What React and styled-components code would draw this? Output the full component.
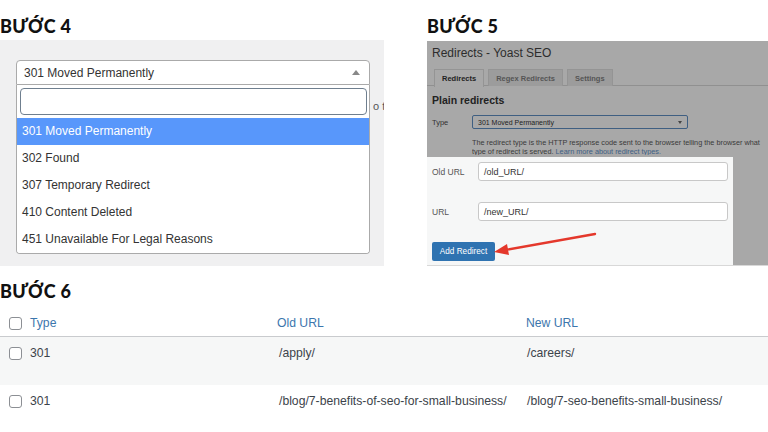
import React from 'react'
import styled, { createGlobalStyle } from 'styled-components'

const Global = createGlobalStyle`
  html, body { margin: 0; padding: 0; background: #fff; }
  body { font-family: "Liberation Sans", Arial, sans-serif; }
  * { box-sizing: border-box; }
`

const Page = styled.div`
  width: 768px;
  height: 432px;
  overflow: hidden;
  display: flex;
  flex-direction: column;
`

const TopRow = styled.div`
  display: grid;
  grid-template-columns: 384px 341px;
  column-gap: 43px;
  padding-top: 16px;
`

const Column = styled.div`
  display: flex;
  flex-direction: column;
`

const Heading = styled.h2`
  margin: 0;
  font-family: Lato, "Open Sans", sans-serif;
  font-weight: 900;
  font-size: 18px;
  line-height: 21px;
  color: #111;
  letter-spacing: 0.3px;
  height: ${({ $h }) => $h || 24}px;
`

/* ---------- step 4 ---------- */
const GreyPanel = styled.div`
  background: #f0f0f1;
  height: 226px;
  padding: 20px 0 0 16px;
  display: flex;
  overflow: hidden;
`

const Dropdown = styled.div`
  width: 354px;
  flex: none;
  display: flex;
  flex-direction: column;
`

const SelectBox = styled.div`
  height: 25px;
  background: #fff;
  border: 1px solid #aaa;
  border-radius: 4px 4px 0 0;
  display: flex;
  align-items: center;
  justify-content: space-between;
  padding: 0 9px 0 7px;
  font-size: 12px;
  color: #333;
`

const Caret = styled.span`
  width: 0;
  height: 0;
  border-left: 4px solid transparent;
  border-right: 4px solid transparent;
  border-bottom: 5px solid #888;
`

const Menu = styled.div`
  background: #fff;
  border: 1px solid #aaa;
  border-top: none;
  border-radius: 0 0 4px 4px;
  padding-top: 3px;
  height: 169px;
  overflow: hidden;
`

const Search = styled.div`
  height: 27px;
  margin: 0 2px 3px 3px;
  border: 1.5px solid #6f7f8f;
  border-radius: 4px;
`

const Option = styled.div`
  height: 27px;
  line-height: 27px;
  padding-left: 5px;
  font-size: 12px;
  background: ${({ $active }) => ($active ? '#5897fb' : '#fff')};
  color: ${({ $active }) => ($active ? '#fff' : '#333')};
`

const BehindText = styled.span`
  margin: 40px 0 0 3px;
  font-size: 11px;
  color: #555;
  white-space: nowrap;
`

/* ---------- step 5 ---------- */
const Shot = styled.div`
  background: #a8a8a8;
  height: 225px;
  margin-top: 1px;
  overflow: hidden;
  display: flex;
  flex-direction: column;
  border-bottom: 1px solid #d8d8d8;
`

const ShotTitle = styled.div`
  margin: 3px 0 0 5px;
  font-size: 12px;
  line-height: 19px;
  color: #2d2d2d;
`

const Tabs = styled.div`
  margin-top: 5px;
  height: 18px;
  border-bottom: 1px solid #909090;
  display: flex;
  gap: 4px;
  padding-left: 7px;
`

const Tab = styled.div`
  padding: 0 7px;
  height: ${({ $active }) => ($active ? 18 : 17)}px;
  display: flex;
  align-items: center;
  font-size: 7.5px;
  font-weight: 700;
  color: ${({ $active }) => ($active ? '#222' : '#555')};
  background: ${({ $active }) => ($active ? '#a8a8a8' : '#9c9c9c')};
  border: 1px solid #949494;
  border-bottom: none;
  margin-top: ${({ $active }) => ($active ? 0 : 1)}px;
  position: relative;
  top: ${({ $active }) => ($active ? 1 : 0)}px;
`

const SubTitle = styled.div`
  margin: 8px 0 0 5px;
  font-size: 10.5px;
  font-weight: 700;
  line-height: 13px;
  color: #222;
`

const TypeRow = styled.div`
  margin: 8px 0 0 5px;
  display: flex;
  align-items: center;
  height: 14px;
`

const SmallLabel = styled.span`
  width: 40px;
  font-size: 7.5px;
  color: #333;
`

const MiniSelect = styled.div`
  width: 216px;
  height: 14px;
  border: 1px solid #3f5f82;
  border-radius: 2px;
  display: flex;
  align-items: center;
  justify-content: space-between;
  padding: 0 5px;
  font-size: 7px;
  color: #222;
`

const MiniArrow = styled.span`
  width: 0;
  height: 0;
  border-left: 2px solid transparent;
  border-right: 2px solid transparent;
  border-top: 3px solid #444;
`

const Desc = styled.div`
  margin: 9px 0 0 45px;
  font-size: 7.3px;
  line-height: 9px;
  color: #3a3a3a;
  white-space: nowrap;
  height: 17px;
  overflow: hidden;
  a { color: #3e5f84; text-decoration: none; }
`

const FormBox = styled.div`
  position: relative;
  width: 306px;
  margin-top: 2px;
  flex: 1;
  background: #f6f7f7;
  padding: 5px 0 0 5px;
  display: flex;
  flex-direction: column;
  gap: 21px;
`

const FieldRow = styled.div`
  display: flex;
  align-items: center;
  height: 19px;
`

const FieldLabel = styled.span`
  width: 46px;
  font-size: 8.5px;
  color: #555;
`

const Field = styled.div`
  width: 250px;
  height: 19px;
  background: #fff;
  border: 1px solid #c8c8c8;
  border-radius: 3px;
  padding-left: 5px;
  display: flex;
  align-items: center;
  font-size: 9px;
  color: #333;
`

const AddButton = styled.div`
  width: 63px;
  height: 19px;
  background: #2f73b1;
  border-radius: 2px;
  color: #fff;
  font-size: 8.2px;
  display: flex;
  align-items: center;
  justify-content: center;
`

const ArrowSvg = styled.svg`
  position: absolute;
  left: 64px;
  top: 74px;
`

/* ---------- step 6 ---------- */
const Bottom = styled.div`
  margin-top: 15px;
  display: flex;
  flex-direction: column;
`

const Table = styled.div`
  margin-top: 8px;
  display: flex;
  flex-direction: column;
`

const Row = styled.div`
  display: grid;
  grid-template-columns: 277px 249px 1fr;
  height: ${({ $head }) => ($head ? 27 : 48)}px;
  align-items: ${({ $head }) => ($head ? 'center' : 'start')};
  padding-top: ${({ $head }) => ($head ? 0 : 8)}px;
  background: ${({ $bg }) => $bg || '#fff'};
  border-bottom: ${({ $head }) => ($head ? '1px solid #c9cbce' : 'none')};
  font-size: 12.2px;
  color: ${({ $head }) => ($head ? '#3c76ad' : '#3c434a')};
`

const FirstCell = styled.div`
  display: flex;
  align-items: center;
  gap: 8px;
  padding-left: 9px;
  height: 16px;
`

const Cell = styled.div`
  line-height: 16px;
  padding-left: ${({ $pl }) => $pl || 0}px;
  white-space: nowrap;
`

const Check = styled.span`
  width: 13px;
  height: 13px;
  border: 1px solid #8c8f94;
  border-radius: 3px;
  background: #fff;
  flex: none;
`

const options = [
  '301 Moved Permanently',
  '302 Found',
  '307 Temporary Redirect',
  '410 Content Deleted',
  '451 Unavailable For Legal Reasons',
]

const rows = [
  { type: '301', from: '/apply/', to: '/careers/', bg: '#f6f7f7' },
  { type: '301', from: '/blog/7-benefits-of-seo-for-small-business/', to: '/blog/7-seo-benefits-small-business/', bg: '#fff' },
]

export default function App() {
  return (
    <Page>
      <Global />
      <TopRow>
        <Column>
          <Heading>BƯỚC 4</Heading>
          <GreyPanel>
            <Dropdown>
              <SelectBox>
                301 Moved Permanently
                <Caret />
              </SelectBox>
              <Menu>
                <Search />
                {options.map((o, i) => (
                  <Option key={o} $active={i === 0}>{o}</Option>
                ))}
              </Menu>
            </Dropdown>
            <BehindText>o t</BehindText>
          </GreyPanel>
        </Column>

        <Column>
          <Heading>BƯỚC 5</Heading>
          <Shot>
            <ShotTitle>Redirects - Yoast SEO</ShotTitle>
            <Tabs>
              <Tab $active>Redirects</Tab>
              <Tab>Regex Redirects</Tab>
              <Tab>Settings</Tab>
            </Tabs>
            <SubTitle>Plain redirects</SubTitle>
            <TypeRow>
              <SmallLabel>Type</SmallLabel>
              <MiniSelect>
                301 Moved Permanently
                <MiniArrow />
              </MiniSelect>
            </TypeRow>
            <Desc>
              The redirect type is the HTTP response code sent to the browser telling the browser what
              <br />
              type of redirect is served. <a href="#">Learn more about redirect types.</a>
            </Desc>
            <FormBox>
              <FieldRow>
                <FieldLabel>Old URL</FieldLabel>
                <Field>/old_URL/</Field>
              </FieldRow>
              <FieldRow>
                <FieldLabel>URL</FieldLabel>
                <Field>/new_URL/</Field>
              </FieldRow>
              <AddButton>Add Redirect</AddButton>
              <ArrowSvg width="110" height="26" viewBox="0 0 110 26">
                <line x1="104" y1="3" x2="14" y2="19" stroke="#e4382c" strokeWidth="2.4" strokeLinecap="round" />
                <polygon points="3,21 16,13 18,24" fill="#e4382c" />
              </ArrowSvg>
            </FormBox>
          </Shot>
        </Column>
      </TopRow>

      <Bottom>
        <Heading $h={21}>BƯỚC 6</Heading>
        <Table>
          <Row $head>
            <FirstCell>
              <Check />
              <span>Type</span>
            </FirstCell>
            <Cell>Old URL</Cell>
            <Cell>New URL</Cell>
          </Row>
          {rows.map((r, i) => (
            <Row key={i} $bg={r.bg}>
              <FirstCell>
                <Check />
                <span>{r.type}</span>
              </FirstCell>
              <Cell $pl={2}>{r.from}</Cell>
              <Cell $pl={1}>{r.to}</Cell>
            </Row>
          ))}
        </Table>
      </Bottom>
    </Page>
  )
}
